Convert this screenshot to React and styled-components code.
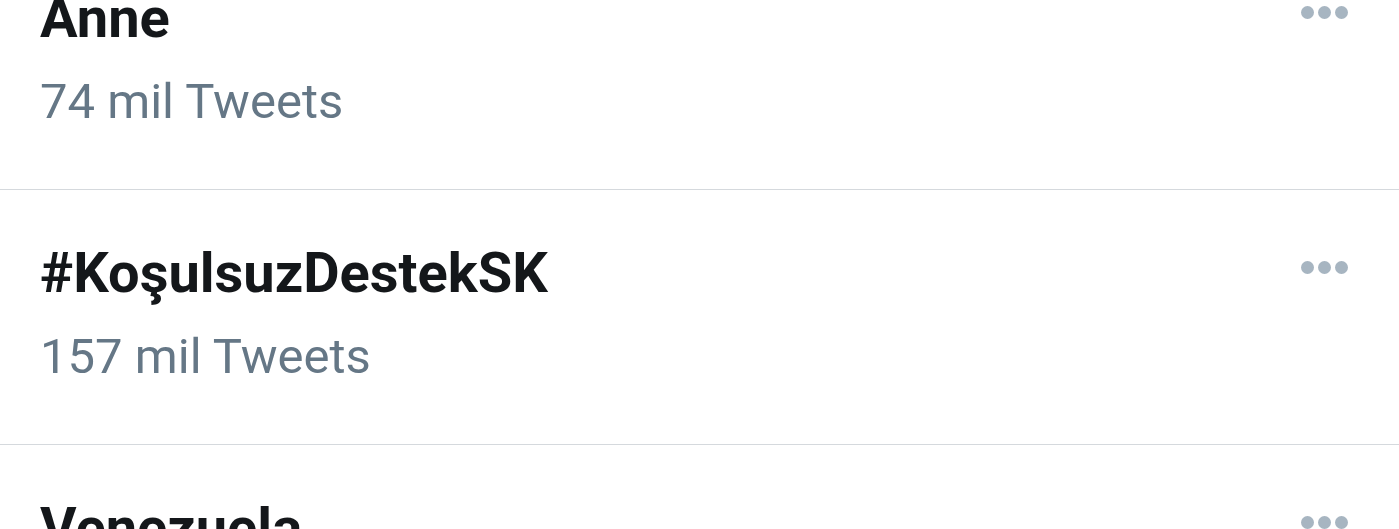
import React from "react";
import styled, { createGlobalStyle } from "styled-components";

const trends = [
  { name: "Anne", count: "74 mil Tweets" },
  { name: "#KoşulsuzDestekSK", count: "157 mil Tweets" },
  { name: "Venezuela", count: "98 mil Tweets" },
];

const Global = createGlobalStyle`
  html, body {
    margin: 0;
    padding: 0;
    background: #ffffff;
    overflow: hidden;
  }
  body {
    font-family: Roboto, "Noto Sans", sans-serif;
  }
`;

const List = styled.div`
  margin-top: -65px;
  width: 1399px;
`;

const Row = styled.div`
  display: flex;
  align-items: flex-start;
  justify-content: space-between;
  padding: 50px 51px 57px 40px;
  border-bottom: 1px solid #d5d9dd;
`;

const Info = styled.div`
  display: flex;
  flex-direction: column;
  gap: 21px;
`;

const Title = styled.div`
  font-size: 56px;
  line-height: 66px;
  font-weight: 700;
  color: #14171a;
`;

const Count = styled.div`
  font-size: 49px;
  line-height: 60px;
  color: #657786;
`;

const More = styled.svg`
  margin-top: 21px;
  flex-shrink: 0;
`;

function MoreIcon() {
  return (
    <More width="47" height="13" viewBox="0 0 47 13">
      <circle cx="6.5" cy="6.5" r="6.5" fill="#a7b5c1" />
      <circle cx="23.5" cy="6.5" r="6.5" fill="#a7b5c1" />
      <circle cx="40.5" cy="6.5" r="6.5" fill="#a7b5c1" />
    </More>
  );
}

export default function App() {
  return (
    <>
      <Global />
      <List>
        {trends.map((t, idx) => (
          <Row key={idx}>
            <Info>
              <Title>{t.name}</Title>
              <Count>{t.count}</Count>
            </Info>
            <MoreIcon />
          </Row>
        ))}
      </List>
    </>
  );
}
